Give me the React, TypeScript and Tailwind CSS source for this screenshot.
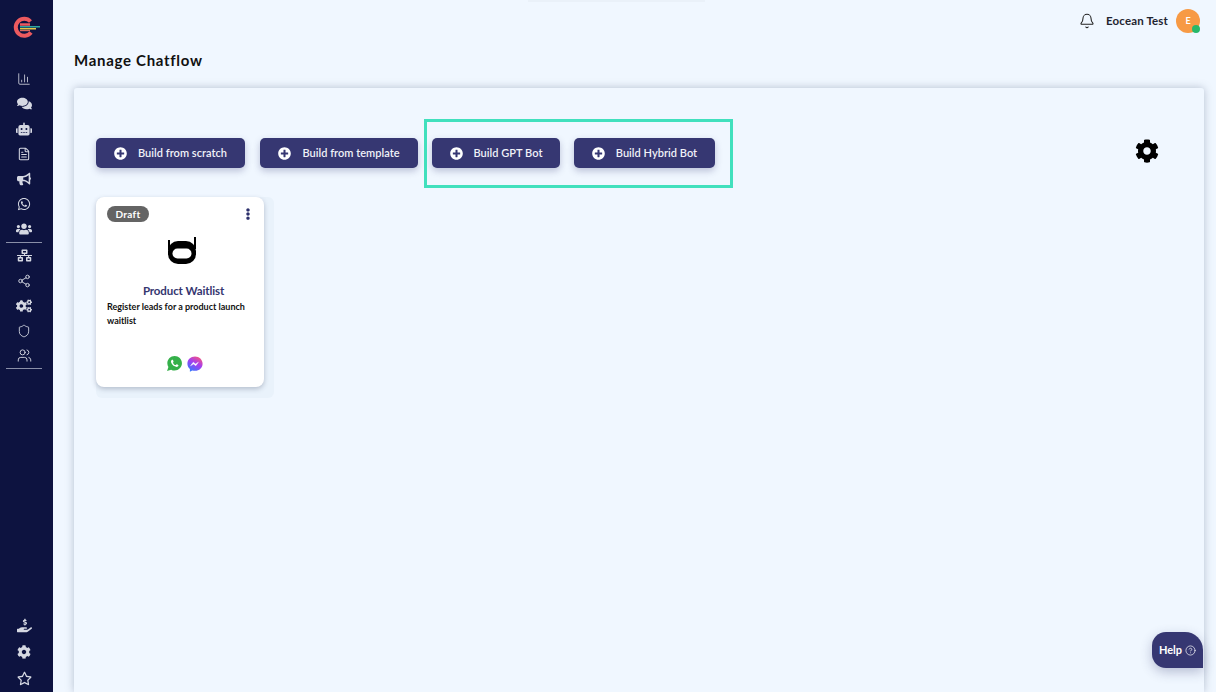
import React from 'react';
import { FaBullhorn, FaCog, FaCogs, FaComments, FaEllipsisV, FaHandHoldingUsd, FaNetworkWired, FaPlusCircle, FaRegStar, FaRobot, FaUsers, FaWhatsapp } from 'react-icons/fa';
import { IoLogoWhatsapp } from 'react-icons/io';
import { Bell, ChartColumn, CircleHelp, FileText, Share2, Shield, Users } from 'lucide-react';

const Logo = () => (
  <svg width="30" height="24" viewBox="0 0 30 24" fill="none">
    <path d="M19.5 6.5A8.500 8.500 0 1 0 20 17.500" stroke="#ec5a5f" strokeWidth="4" />
    <path d="M9 9.500h10" stroke="#ec5a5f" strokeWidth="2.500" />
    <rect x="9" y="11" width="20" height="1.500" fill="#2fa7a0" />
    <rect x="9" y="13" width="16" height="1.500" fill="#e8c547" />
    <rect x="9" y="15" width="10" height="1.200" fill="#d9695f" />
  </svg>
);

const BotLogo = () => (
  <svg width="28" height="27" viewBox="0 0 28 27">
    <rect x="0" y="3" width="2" height="10" fill="#000" />
    <rect x="26" y="0" width="2" height="12" fill="#000" />
    <rect x="0" y="4" width="28" height="23" rx="10" fill="#000" />
    <rect x="4.500" y="11.500" width="19" height="10" rx="5" fill="#fff" />
  </svg>
);

const Messenger = () => (
  <svg width="16" height="16" viewBox="0 0 16 16">
    <defs>
      <linearGradient id="msg" x1="0.2" y1="1" x2="0.8" y2="0">
        <stop offset="0" stopColor="#2f7bff" />
        <stop offset="0.55" stopColor="#a43df0" />
        <stop offset="1" stopColor="#f9577a" />
      </linearGradient>
    </defs>
    <path d="M8 0.500C3.700 0.500 0.400 3.600 0.400 7.700c0 2.200 1 4.100 2.500 5.400V15.700l2.400-1.300c.8.200 1.700.400 2.700.400 4.300 0 7.600-3.100 7.600-7.100S12.300 0.500 8 0.500z" fill="url(#msg)" />
    <path d="M3.500 9.800l2.800-3.600 2.200 1.800 2.900-1.800-2.600 3.500-2.200-1.700z" fill="#fff" stroke="#fff" strokeWidth="0.4" strokeLinejoin="round" />
  </svg>
);

const topIcons = [
  <ChartColumn size={14} strokeWidth={1.4} />,
  <FaComments size={15} />,
  <FaRobot size={16} />,
  <FileText size={14} strokeWidth={1.8} />,
  <FaBullhorn size={14} />,
  <FaWhatsapp size={14} />,
  <FaUsers size={16} />,
];

const midIcons = [
  <FaNetworkWired size={15} />,
  <Share2 size={14} strokeWidth={1.6} />,
  <FaCogs size={16} />,
  <Shield size={14} strokeWidth={1.5} />,
  <Users size={15} strokeWidth={1.5} />,
];

const bottomIcons = [
  <FaHandHoldingUsd size={15} />,
  <FaCog size={14} />,
  <FaRegStar size={15} />,
];

const buttons = [
  { label: 'Build from scratch', width: 'w-[149px]' },
  { label: 'Build from template', width: 'w-[158px]' },
  { label: 'Build GPT Bot', width: 'w-[128px]' },
  { label: 'Build Hybrid Bot', width: 'w-[141px]' },
];

const Sidebar = () => (
  <div className="w-[53px] h-full shrink-0 bg-[#0d1340] flex flex-col text-[#d5d8e2]">
    <div className="h-[66px] w-full flex items-start pl-[11px] pt-[15px]"><Logo /></div>
    <div className="w-[48px] flex flex-col items-center">
      {topIcons.map((icon, i) => (
        <div key={i} className="h-[25px] flex items-center justify-center">{icon}</div>
      ))}
    </div>
    <div className="w-[36px] h-px bg-[#8a8fa8] ml-[6px] mt-[1px]" />
    <div className="w-[48px] flex flex-col items-center">
      {midIcons.map((icon, i) => (
        <div key={i} className="h-[25px] flex items-center justify-center">{icon}</div>
      ))}
    </div>
    <div className="w-[36px] h-px bg-[#8a8fa8] ml-[6px]" />
    <div className="mt-auto w-[48px] flex flex-col items-center">
      {bottomIcons.map((icon, i) => (
        <div key={i} className="h-[26.500px] flex items-center justify-center">{icon}</div>
      ))}
    </div>
  </div>
);

const BotCard = () => (
  <div className="w-[178px] h-[201px] bg-[#e9f2fb] rounded-md">
    <div className="w-[168px] h-[190px] bg-white rounded-lg shadow-[0_2px_5px_rgba(60,70,100,0.3)] relative flex flex-col">
      <div className="flex items-start justify-between pl-[11px] pr-[10px] pt-[9px]">
        <span className="h-[16px] w-[42px] rounded-full bg-[#646464] text-white text-[10px] font-bold flex items-center justify-center tracking-[0.3px]">Draft</span>
        <FaEllipsisV size={12} className="text-[#2c2f6b] mt-[2px]" />
      </div>
      <div className="flex justify-center mt-[15px] pl-[4px]"><BotLogo /></div>
      <div className="text-center text-[#35366f] text-[11.500px] font-bold mt-[19px] pl-[7px] leading-[16px] tracking-[-0.1px]">Product Waitlist</div>
      <p className="text-[9px] font-bold text-[#111] px-[11px] leading-[14px] mt-[1px]">Register leads for a product launch waitlist</p>
      <div className="mt-auto mb-[15px] flex justify-center items-center gap-[4px] pl-[10px] pr-[2px]">
        <IoLogoWhatsapp size={17} className="text-[#35b04a]" />
        <Messenger />
      </div>
    </div>
  </div>
);

const App = () => {
  return (
    <div className="w-[1216px] h-[692px] flex overflow-hidden bg-[#f0f7ff] font-['Lato','Liberation_Sans',sans-serif]">
      <Sidebar />
      <div className="flex-1 min-w-0 flex flex-col relative">
        <div className="absolute left-[475px] top-0 w-[177px] h-[2px] bg-[#eaf1f9]" />
        <div className="h-[41px] shrink-0 flex items-center justify-end pr-[16px]">
          <Bell size={16} strokeWidth={1.6} className="text-[#222] mr-[11px]" />
          <span className="text-[11.500px] font-bold text-[#1f2430] tracking-[0.15px] mr-[8px]">Eocean Test</span>
          <div className="w-[24px] h-[24px] rounded-full bg-[#f79a45] text-white text-[9px] font-bold flex items-center justify-center relative">
            E
            <span className="absolute right-0 bottom-0 w-[8px] h-[8px] rounded-full bg-[#27b86a]" />
          </div>
        </div>
        <div className="h-[47px] shrink-0 pl-[21px] pt-[8px]">
          <h1 className="text-[15px] font-bold text-[#111] leading-[22px] tracking-[0.7px]">Manage Chatflow</h1>
        </div>
        <div className="flex-1 ml-[21px] mr-[12px] rounded-t-[3px] bg-[#f0f7ff] shadow-[0_0_8px_rgba(70,85,115,0.35)] relative pl-[22px] pt-[50px]">
          <div className="flex items-center h-[30px]">
            {buttons.map((b, i) => (
              <button key={b.label} className={`${b.width} h-[30px] rounded-[5px] bg-[#363772] text-[#f0f1f8] text-[11px] font-semibold tracking-[0.03px] flex items-center justify-center gap-[11px] shadow-[0_3px_7px_rgba(50,55,110,0.28)] ${i === 0 ? 'mr-[15px]' : i === 1 ? 'mr-[14px]' : i === 2 ? 'mr-[14px]' : ''}`}>
                <FaPlusCircle size={13} className="text-white" />
                <span>{b.label}</span>
              </button>
            ))}
          </div>
          <FaCog size={24} className="absolute left-[1061px] top-[51px] text-black" />
          <div className="mt-[29px]"><BotCard /></div>
          {/* teal highlight around the new bot buttons */}
          <div className="absolute left-[350px] top-[31px] w-[309px] h-[69px] border-[3px] border-[#41e0bd]" />
        </div>
        <div className="absolute left-[1099px] top-[632px] w-[51px] h-[36px] bg-[#363772] rounded-tl-[14px] rounded-tr-[18px] rounded-bl-[14px] text-white text-[11px] font-bold flex items-center justify-center gap-[3px] shadow-[0_4px_12px_rgba(50,55,110,0.3)]">
          Help <CircleHelp size={11} strokeWidth={1.5} />
        </div>
      </div>
    </div>
  );
};

export default App;
